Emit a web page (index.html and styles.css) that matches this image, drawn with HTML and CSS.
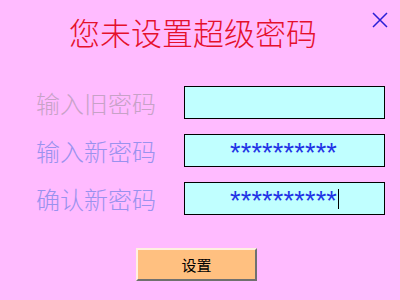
FILE: index.html
```html
<!DOCTYPE html>
<html lang="zh">
<head>
<meta charset="utf-8">
<link rel="stylesheet" href="styles.css">
</head>
<body>
<div class="dialog">
  <h1 class="title">您未设置超级密码</h1>
  <svg class="close" width="16" height="16" viewBox="0 0 16 16"><path d="M1 1 L15 15 M15 1 L1 15" stroke="#2a1fd6" stroke-width="1.5" fill="none"/></svg>
  <div class="form">
    <div class="row">
      <span class="label label-old">输入旧密码</span>
      <div class="field"></div>
    </div>
    <div class="row">
      <span class="label">输入新密码</span>
      <div class="field"><span class="stars">**********</span></div>
    </div>
    <div class="row">
      <span class="label">确认新密码</span>
      <div class="field"><span class="stars">**********</span><span class="caret"></span></div>
    </div>
  </div>
  <div class="actions">
    <button class="btn">设置</button>
  </div>
</div>
</body>
</html>
```
FILE: styles.css
```css
html, body {
  margin: 0;
  padding: 0;
  background: #ffbbff;
}
.dialog {
  position: relative;
  width: 400px;
  height: 300px;
  box-sizing: border-box;
  padding: 14px 0 0 0;
  font-family: "Noto Sans CJK SC", sans-serif;
}
.title {
  margin: 0 0 0 69px;
  font-size: 31px;
  line-height: 36px;
  font-weight: 300;
  color: #e5102c;
}
.close {
  position: absolute;
  left: 372px;
  top: 12px;
}
.form {
  display: flex;
  flex-direction: column;
  gap: 15px;
  margin-top: 36px;
  padding-left: 36px;
}
.row {
  display: flex;
  align-items: center;
}
.label {
  width: 148px;
  font-size: 24px;
  line-height: 32px;
  font-weight: 300;
  color: #9a92ee;
}
.label-old {
  color: #c7a2c7;
}
.field {
  box-sizing: border-box;
  width: 201px;
  height: 33px;
  border: 1px solid #000;
  background: #c0ffff;
  display: flex;
  align-items: center;
  padding-left: 45px;
}
.stars {
  font-family: "Liberation Sans", sans-serif;
  font-size: 27px;
  line-height: 27px;
  padding-top: 5px;
  letter-spacing: 0.2px;
  color: #2233e6;
}
.caret {
  width: 1px;
  height: 20px;
  background: #000;
  margin-left: 1px;
}
.actions {
  margin-top: 33px;
  padding-left: 136px;
}
.btn {
  box-sizing: border-box;
  width: 121px;
  height: 33px;
  background: #ffc080;
  border: 2px solid;
  border-color: #fff0e0 #707070 #707070 #fff0e0;
  font-family: "Noto Sans CJK SC", sans-serif;
  font-size: 15px;
  color: #000;
  padding: 0;
}
```
